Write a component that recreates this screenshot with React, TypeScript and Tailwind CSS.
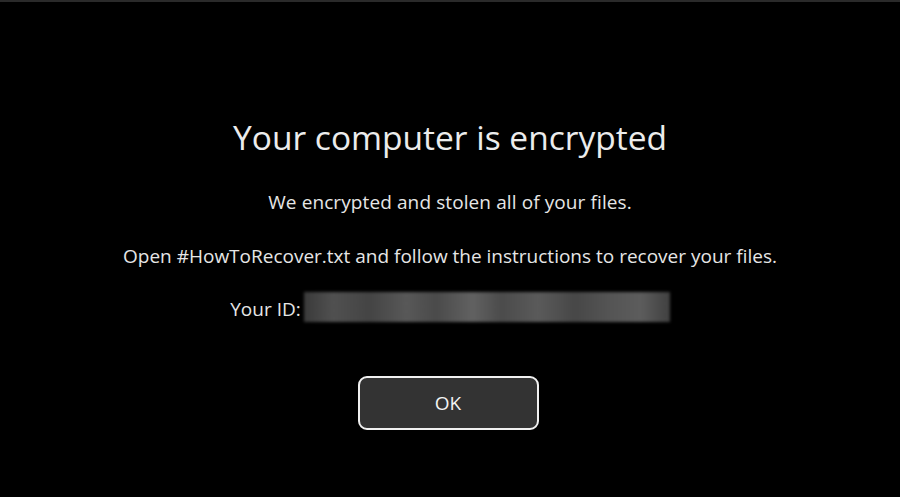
export default function App() {
  return (
    <div className="w-[900px] h-[497px] bg-black overflow-hidden flex flex-col font-['Open_Sans',sans-serif]">
      <div className="h-[2px] bg-[#2a2a2a]" />
      <div className="flex flex-col items-center">
        <h1 className="mt-[115px] text-[33.5px] leading-[40px] text-[#ececec]">
          Your computer is encrypted
        </h1>
        <p className="mt-[33px] text-[19px] leading-[24px] text-[#e6e6e6] tracking-[0.1px]">
          We encrypted and stolen all of your files.
        </p>
        <p className="mt-[30px] text-[19px] leading-[24px] text-[#e6e6e6]">
          Open #HowToRecover.txt and follow the instructions to recover your files.
        </p>
        <div className="mt-[24px] flex items-start gap-[3px]">
          <span className="mt-[5px] text-[19px] leading-[24px] text-[#e6e6e6]">Your ID:</span>
          <div className="w-[366px] h-[30px] bg-[linear-gradient(90deg,#3a3a3a,#505050_8%,#444_18%,#585858_28%,#4a4a4a_36%,#616161_46%,#4b4b4b_54%,#5a5a5a_64%,#474747_74%,#555_84%,#5c5c5c_92%,#404040)] blur-[1.5px]" />
        </div>
        <button className="mt-[54px] w-[181px] h-[54px] rounded-[9px] border-2 border-[#f0f0f0] bg-[#333333] text-[19px] font-medium text-[#f2f2f2] ml-[-4px]">
          OK
        </button>
      </div>
    </div>
  );
}
